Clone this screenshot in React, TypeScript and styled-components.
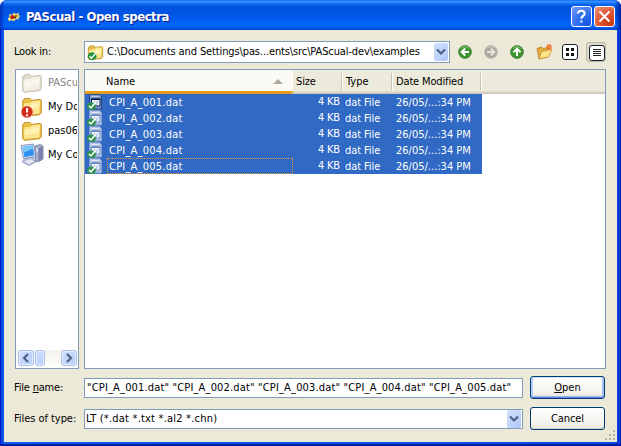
import React from 'react';
import styled, { createGlobalStyle } from 'styled-components';

const Global = createGlobalStyle`
  * { box-sizing: border-box; }
  body { margin: 0; background: #fff; overflow: hidden; }
`;

const Window = styled.div`
  width: 621px; height: 446px; overflow: hidden;
  display: flex; flex-direction: column;
  border-radius: 7px 7px 0 0;
  background: #0831d9;
  color: #000;
  font: 11px/16px "DejaVu Sans Condensed", "DejaVu Sans", sans-serif;
  font-stretch: condensed;
  white-space: nowrap;
`;
const TitleBar = styled.header`
  height: 30px; flex: none;
  display: flex; align-items: center;
  padding: 3px 6px 0 7px;
  background: linear-gradient(90deg, rgba(0,30,170,.65) 0, rgba(0,60,220,0) 5px, rgba(0,60,220,0) 615px, rgba(0,20,140,.8) 621px),
    linear-gradient(#0058e6 0, #3a93ff 1px, #2f8cfd 2px, #0969f0 4px, #0053dd 7px, #0054e3 13px, #005cf4 20px, #0267ff 26px, #0058ee 28px, #0040c8 30px);
`;
const Title = styled.h1`
  margin: 0 0 0 5px; flex: 1;
  font: bold 13px/20px "DejaVu Sans Condensed", "DejaVu Sans", sans-serif;
  font-stretch: condensed;
  letter-spacing: -.46px;
  color: #fff; text-shadow: 1px 1px #0a1883;
`;
const CaptionButton = styled.button<{ $close?: boolean }>`
  width: 21px; height: 21px; padding: 0; margin-left: 2px;
  display: flex; align-items: center; justify-content: center;
  border: 1px solid #fff; border-radius: 3px;
  background: ${p => p.$close
    ? 'radial-gradient(circle at 85% 90%, #c83a12 0, #df5330 50%, #ee9a80 100%)'
    : 'radial-gradient(circle at 80% 90%, #1459e5 0, #3371ec 50%, #769df5 100%)'};
`;
const Frame = styled.div`
  flex: 1; display: flex; min-height: 0;
  border: solid #0144e6; border-width: 0 1px 2px 1px;
  padding: 0 3px 2px;
  border-color: #0019cf #0023b0 #001ca0 #0019cf;
  background: linear-gradient(90deg, #0a3fe0 0, #0a5bea 3px, #0848e8 610px, #0838d8 619px);
`;
const Body = styled.main`
  flex: 1; background: #ece9d8; padding: 11px 0 0 11px;
  display: flex; flex-direction: column; position: relative;
`;
const LookRow = styled.div`
  height: 22px; display: flex; align-items: center;
`;
const Label = styled.label`
  width: 69px; flex: none; margin: 0 1px 0 -1px;
`;
const Combo = styled.div<{ $w: number; $h: number; $pad: number }>`
  width: ${p => p.$w}px; height: ${p => p.$h}px;
  display: flex; align-items: center;
  padding: 0 1px 0 ${p => p.$pad}px;
  border: 1px solid #7f9db9; background: #fff;
`;
const Text = styled.span<{ $ls?: number }>`
  letter-spacing: ${p => p.$ls ?? 0}px;
`;
const Value = styled(Text)` flex: 1; `;
const PathValue = styled(Value)` margin-left: 3px; `;
const DropButton = styled.span`
  width: 14px; height: 18px; flex: none;
  display: flex; align-items: center; justify-content: center;
  border-radius: 2px;
  background: linear-gradient(135deg, #d3e0fd, #bacffb 70%, #aec6f5);
`;
const Tools = styled.div`
  display: flex; align-items: center; margin-left: 8px; height: 22px;
`;
const Tool = styled.span<{ $w: number }>`
  width: ${p => p.$w}px; height: 20px; display: flex; align-items: center;
`;
const ViewGlyph = styled.span`
  width: 16px; height: 16px; border: 1.5px solid #16202f; border-radius: 3px; background: #fff;
  display: flex; align-items: center; justify-content: center;
`;
const Pressed = styled.span`
  width: 20px; height: 20px; margin: 0;
  display: flex; align-items: center; justify-content: center;
  padding: 1px 0 0 1px;
  border: 1px solid #bdb9a8; border-radius: 3px; background: #dedacb;
`;
const Panes = styled.div`
  display: flex; gap: 5px; height: 300px; margin-top: 6px;
`;
const Sidebar = styled.nav`
  width: 64px; border: 1px solid #7f9db9; background: #fff;
  display: flex; flex-direction: column; padding: 1px;
`;
const Places = styled.div` flex: 1; overflow: hidden; `;
const Place = styled.div<{ $dim?: boolean }>`
  height: 24px; display: flex; align-items: center; padding-left: 4px;
  overflow: hidden;
  color: ${p => p.$dim ? '#858585' : '#000'};
  svg { flex: none; ${p => p.$dim ? 'filter: grayscale(.75); opacity: .55;' : ''} }
`;
const PlaceIcon = styled.span`
  width: 22px; margin-right: 5px; flex: none; height: 24px;
  display: flex; align-items: center; justify-content: center;
`;
const Scrollbar = styled.div`
  height: 17px; display: flex; background: linear-gradient(#f3f1ec, #fefefb);
`;
const ScrollPart = styled.span<{ $w: number; $push?: boolean }>`
  width: ${p => p.$w}px; height: 16px; flex: none;
  margin-left: ${p => p.$push ? 'auto' : '1px'};
  display: flex; align-items: center; justify-content: center;
  border: 1px solid #a9c0ef; border-radius: 3px;
  box-shadow: inset 0 0 0 1px #e4ecfe;
  background: linear-gradient(135deg, #d0defd, #b9cdfa);
`;
const FileList = styled.section`
  width: 522px; border: 1px solid #7f9db9; background: #fff;
`;
const HeadRow = styled.div`
  display: grid; grid-template-columns: 208px 50px 50px 89px 1fr;
  height: 24px; background: #ebeadb;
  box-shadow: inset 0 -1px #cbc7b8, inset 0 -2px #d8d4c5, inset 0 -3px #e2decd;
`;
const Head = styled.div<{ $sorted?: boolean }>`
  display: flex; align-items: center; justify-content: space-between;
  padding: ${p => p.$sorted ? '0 10px 1px 21px' : '0 0 1px 3px'};
  ${p => p.$sorted
    ? 'background: linear-gradient(#faf9f4 21px, #f9b119 21px, #e4920a 23px, #d1a448 24px); border-bottom-right-radius: 3px;'
    : ''}
`;
const PlainHead = styled(Head)`
  background: linear-gradient(#c7c5b2, #c7c5b2) right 1px top 3px / 1px 17px no-repeat,
    linear-gradient(#fff, #fff) right 0 top 3px / 1px 17px no-repeat;
`;
const FileRow = styled.div`
  display: grid; grid-template-columns: 208px 49px 51px 89px;
  width: 397px; height: 16px; background: #316ac5; color: #fff;
`;
const Cell = styled.div<{ $right?: boolean }>`
  height: 16px; line-height: 17px; padding-left: 3px;
  ${p => p.$right ? 'text-align: right; padding: 0 2px 0 0; line-height: 15px;' : ''}
`;
const NameCell = styled.div`
  display: flex; align-items: center; height: 16px; padding-left: 2px;
`;
const FileName = styled.span<{ $focus?: boolean }>`
  flex: 1; height: 16px; line-height: 15px; margin-left: 4px; padding-left: 1px;
  border: 1px dotted ${p => p.$focus ? '#e8963a' : 'transparent'};
  letter-spacing: .22px;
`;
const FormRow = styled.div<{ $top: number }>`
  display: flex; align-items: center; height: 23px; margin-top: ${p => p.$top}px;
`;
const Input = styled.div`
  width: 439px; height: 20px; padding-left: 2px; line-height: 18px;
  border: 1px solid #7f9db9; background: #fff;
`;
const Button = styled.button<{ $primary?: boolean }>`
  width: 75px; height: 23px; margin-left: 7px; padding: 0;
  font: inherit; color: #000;
  border: 1px solid #003c74; border-radius: 3px;
  background: linear-gradient(#fff, #f3f2ec 75%, #e5e1d7);
  box-shadow: ${p => p.$primary
    ? 'inset 0 1px #cee7ff, inset 0 -1px #6982ee, inset 2px 0 #b4cdf8, inset -2px 0 #a5c0f3, inset 0 -2px #98b4ec'
    : 'inset 0 -1px #d6d0c5'};
`;
const Grip = styled.svg`
  position: absolute; right: 1px; bottom: 1px;
`;

const Chevron = () => (
  <svg width="10" height="8" viewBox="0 0 10 8"><path d="M1 1.5 5 5.5 9 1.5" fill="none" stroke="#4d6185" strokeWidth="2.2" /></svg>
);
const Arrow = ({ rot, gray }: { rot: number; gray?: boolean }) => (
  <svg width="14" height="14" viewBox="0 0 14 14">
    <circle cx="7" cy="7" r="6.4" fill={gray ? '#a9a89f' : '#3b942b'} stroke={gray ? '#bdbbb0' : '#39722d'} strokeWidth=".7" />
    <path d="M3 3.6Q7-.4 11 3.6" fill="none" stroke={gray ? '#c8c6bd' : '#87bf76'} />
    <path d="M11 7H4M7.2 3.5 3.7 7l3.5 3.5" transform={`rotate(${rot} 7 7)`} fill="none" stroke={gray ? '#e7e4d8' : '#fff'} strokeWidth="2" />
  </svg>
);
const Check = ({ x, y }: { x: number; y: number }) => (
  <g transform={`translate(${x} ${y})`}>
    <ellipse cx="5" cy="5.4" rx="5.2" ry="4.6" fill="#27903a" />
    <path d="M2 5.4 4.2 7.8 9.2 2" fill="none" stroke="#fff" strokeWidth="1.7" />
  </g>
);
const Folder = ({ size = 20, badge }: { size?: number; badge?: 'error' | 'check' }) => (
  <svg width={size} height={size} viewBox="0 0 20 20">
    <path d="M1.5 4.5 3 2.5l5-.5 1.5 2 8-1 1 1v11l-1.5 2-14 1.5-1.5-1.5z" fill="#e9bd46" stroke="#b88a22" strokeWidth=".8" />
    <path d="M2.5 7 9 6l1.5-1.5 7-.5-.8 11.8-14 1.5z" fill="#fbe58f" />
    <path d="M3.5 9 10 8l1.5-1.5 5-.5-.5 5-12 3z" fill="#fff3b4" />
    {badge === 'error' && <g><circle cx="5.5" cy="14.5" r="5.3" fill="#d42c1c" stroke="#f7a08e" strokeWidth=".6" /><path d="M5.5 11v4M5.5 16.5v1.8" stroke="#fff" strokeWidth="1.8" /></g>}
    {badge === 'check' && <Check x={1} y={9} />}
  </svg>
);
const NewFolder = () => (
  <svg width="17" height="16" viewBox="0 0 17 16">
    <path d="M1 4.5 5.5 3l1.5 1.5 5-1v9.5L3 15z" fill="#e3ae3b" stroke="#b17d23" strokeWidth=".8" />
    <path d="M3 14.8 5.5 7.6 16 5.2 12.8 13z" fill="#fce48a" stroke="#c18d28" strokeWidth=".8" />
    <path d="M12.8 0v6M10 3h6M11 1l4 4M15 1l-4 4" stroke="#ef6231" strokeWidth="1.2" />
    <circle cx="12.8" cy="3" r="1.4" fill="#f79239" />
  </svg>
);
const Computer = () => (
  <svg width="24" height="24" viewBox="0 0 24 24">
    <path d="M15 3 20 1.5 23 3v13l-5 3-3-2z" fill="#a6aecb" stroke="#6673a0" strokeWidth=".8" />
    <path d="M18.5 5v13l4-2.5V3.5z" fill="#7781ab" /><path d="M16 6h2M16 8h2" stroke="#fff" />
    <path d="M1 2.5 13.5 1l2.5 12.5-12.5 2.3z" fill="#dce1f2" stroke="#6e7eb1" strokeWidth=".8" />
    <path d="M2.5 4 12.5 2.6l1.9 9.7-10 2z" fill="#2e91ec" /><path d="M2.5 4 12.5 2.6l.5 3-9 4z" fill="#79c8fa" />
    <path d="M2 18.5 8 15l5-.5v2.5l3.5 1.5-7.5 4z" fill="#c3cae4" stroke="#7885ae" strokeWidth=".8" />
    <path d="M4.5 18.5 11 16.5l3 1.5-5 2.8z" fill="#e9ecf7" />
  </svg>
);
const FileIcon = ({ lead }: { lead?: boolean }) => (
  <svg width="16" height="16" viewBox="0 0 16 16">
    <path d="M2.5.5h10l2 2v12.5h-12z" fill={lead ? '#7f9cc8' : '#b3c5e3'} stroke={lead ? '#27477f' : '#7f9ccd'} />
    <path d="M4 2.5h8" stroke={lead ? '#b9c8df' : '#dde6f4'} />
    <path d="M4.5 5h8.5v7H4.5z" fill="#eef3fb" stroke={lead ? '#0c2258' : '#7391c8'} />
    <path d="M4 5.2h9.5" stroke={lead ? '#061a52' : '#6484c2'} strokeWidth="1.6" />
    <path d="M7 8h1M10 8h1M9 10h1" stroke="#4772bd" />
    <ellipse cx="4.4" cy="12.2" rx="4.4" ry="3.7" fill="#2f8f4a" />
    <path d="M2 12 4 14 8 9" fill="none" stroke="#fff" strokeWidth="1.5" />
  </svg>
);
const AppIcon = () => (
  <svg width="14" height="12" viewBox="0 0 14 12">
    <path d="M1 7.5 2.6 5.4 2 3l3.3.8L7 1.6l1.8 1.5L12.2 1.4 11.3 4l2.2 1-2 1.4.5 2L9 8l-2 2.2-2-1L1.5 10z" fill="#f0df73" />
    <circle cx="5.3" cy="6.2" r="2.1" fill="#c11f18" /><circle cx="9" cy="5" r="1.6" fill="#b07a26" />
    <circle cx="8" cy="6.4" r="1" fill="#3c1710" />
  </svg>
);

const files = ['001', '002', '003', '004', '005'];

export default function App() {
  return (
    <>
      <Global />
      <Window>
        <TitleBar>
          <AppIcon />
          <Title>PAScual - Open spectra</Title>
          <CaptionButton aria-label="Help">
            <svg width="13" height="15" viewBox="0 0 13 15"><path d="M3 4.6Q3 1.8 6.3 1.8T9.7 4.6Q9.7 6 8 7T6.4 9.8M6.4 11.4v2.2" fill="none" stroke="#fff" strokeWidth="2.1" /></svg>
          </CaptionButton>
          <CaptionButton $close aria-label="Close">
            <svg width="13" height="13" viewBox="0 0 13 13"><path d="M1.5 1.5 11.5 11.5M11.5 1.5 1.5 11.5" stroke="#fff" strokeWidth="2.1" /></svg>
          </CaptionButton>
        </TitleBar>
        <Frame>
          <Body>
            <LookRow>
              <Label><Text $ls={-0.2}>Look in:</Text></Label>
              <Combo $w={366} $h={22} $pad={2}>
                <Folder size={17} badge="check" />
                <PathValue $ls={-0.12}>C:\Documents and Settings\pas...ents\src\PAScual-dev\examples</PathValue>
                <DropButton><Chevron /></DropButton>
              </Combo>
              <Tools>
                <Tool $w={26}><Arrow rot={0} /></Tool>
                <Tool $w={26}><Arrow rot={180} gray /></Tool>
                <Tool $w={26}><Arrow rot={90} /></Tool>
                <Tool $w={26}><NewFolder /></Tool>
                <Tool $w={24}>
                  <ViewGlyph><svg width="10" height="10"><path d="M1 1h3v3H1zM6 1h3v3H6zM1 6h3v3H1zM6 6h3v3H6z" fill="#111" /></svg></ViewGlyph>
                </Tool>
                <Pressed>
                  <ViewGlyph><svg width="8" height="10"><path d="M0 1.5h8M0 3.5h8M0 5.5h8M0 7.5h8" stroke="#222" /></svg></ViewGlyph>
                </Pressed>
              </Tools>
            </LookRow>
            <Panes>
              <Sidebar>
                <Places>
                  <Place $dim><PlaceIcon><Folder size={22} /></PlaceIcon><Text>PAScual</Text></Place>
                  <Place><PlaceIcon><Folder size={22} badge="error" /></PlaceIcon><Text>My Documents</Text></Place>
                  <Place><PlaceIcon><Folder size={22} /></PlaceIcon><Text>pas06</Text></Place>
                  <Place><PlaceIcon><Computer /></PlaceIcon><Text>My Computer</Text></Place>
                </Places>
                <Scrollbar>
                  <ScrollPart $w={16}><svg width="8" height="10"><path d="M6 1 2 5l4 4" fill="none" stroke="#4d6185" strokeWidth="2.2" /></svg></ScrollPart>
                  <ScrollPart $w={10} />
                  <ScrollPart $w={16} $push><svg width="8" height="10"><path d="M2 1l4 4-4 4" fill="none" stroke="#4d6185" strokeWidth="2.2" /></svg></ScrollPart>
                </Scrollbar>
              </Sidebar>
              <FileList>
                <HeadRow>
                  <Head $sorted><Text>Name</Text><svg width="10" height="6"><path d="M5 0 10 5H0z" fill="#aca899" /></svg></Head>
                  <PlainHead><Text $ls={-0.15}>Size</Text></PlainHead>
                  <PlainHead><Text>Type</Text></PlainHead>
                  <PlainHead><Text $ls={-0.15}>Date Modified</Text></PlainHead>
                </HeadRow>
                {files.map((n, i) => (
                  <FileRow key={n}>
                    <NameCell><FileIcon lead={i === 0} /><FileName $focus={i === 4}>CPI_A_{n}.dat</FileName></NameCell>
                    <Cell $right><Text $ls={-0.15}>4 KB</Text></Cell>
                    <Cell><Text $ls={-0.08}>dat File</Text></Cell>
                    <Cell><Text>26/05/...:34 PM</Text></Cell>
                  </FileRow>
                ))}
              </FileList>
            </Panes>
            <FormRow $top={7}>
              <Label><Text $ls={-0.2}>File <u>n</u>ame:</Text></Label>
              <Input><Text $ls={0.16}>{files.map(n => `"CPI_A_${n}.dat"`).join(' ')}</Text></Input>
              <Button $primary><Text><u>O</u>pen</Text></Button>
            </FormRow>
            <FormRow $top={8}>
              <Label><Text $ls={-0.05}>Files of type:</Text></Label>
              <Combo $w={439} $h={20} $pad={1}>
                <Value $ls={0.2}>LT (*.dat *.txt *.al2 *.chn)</Value>
                <DropButton><Chevron /></DropButton>
              </Combo>
              <Button><Text $ls={-0.1}>Cancel</Text></Button>
            </FormRow>
            <Grip width="11" height="11"><path d="M8 0h2v2H8zM4 4h2v2H4zM8 4h2v2H8zM0 8h2v2H0zM4 8h2v2H4zM8 8h2v2H8z" fill="#b8b4a3" /></Grip>
          </Body>
        </Frame>
      </Window>
    </>
  );
}
